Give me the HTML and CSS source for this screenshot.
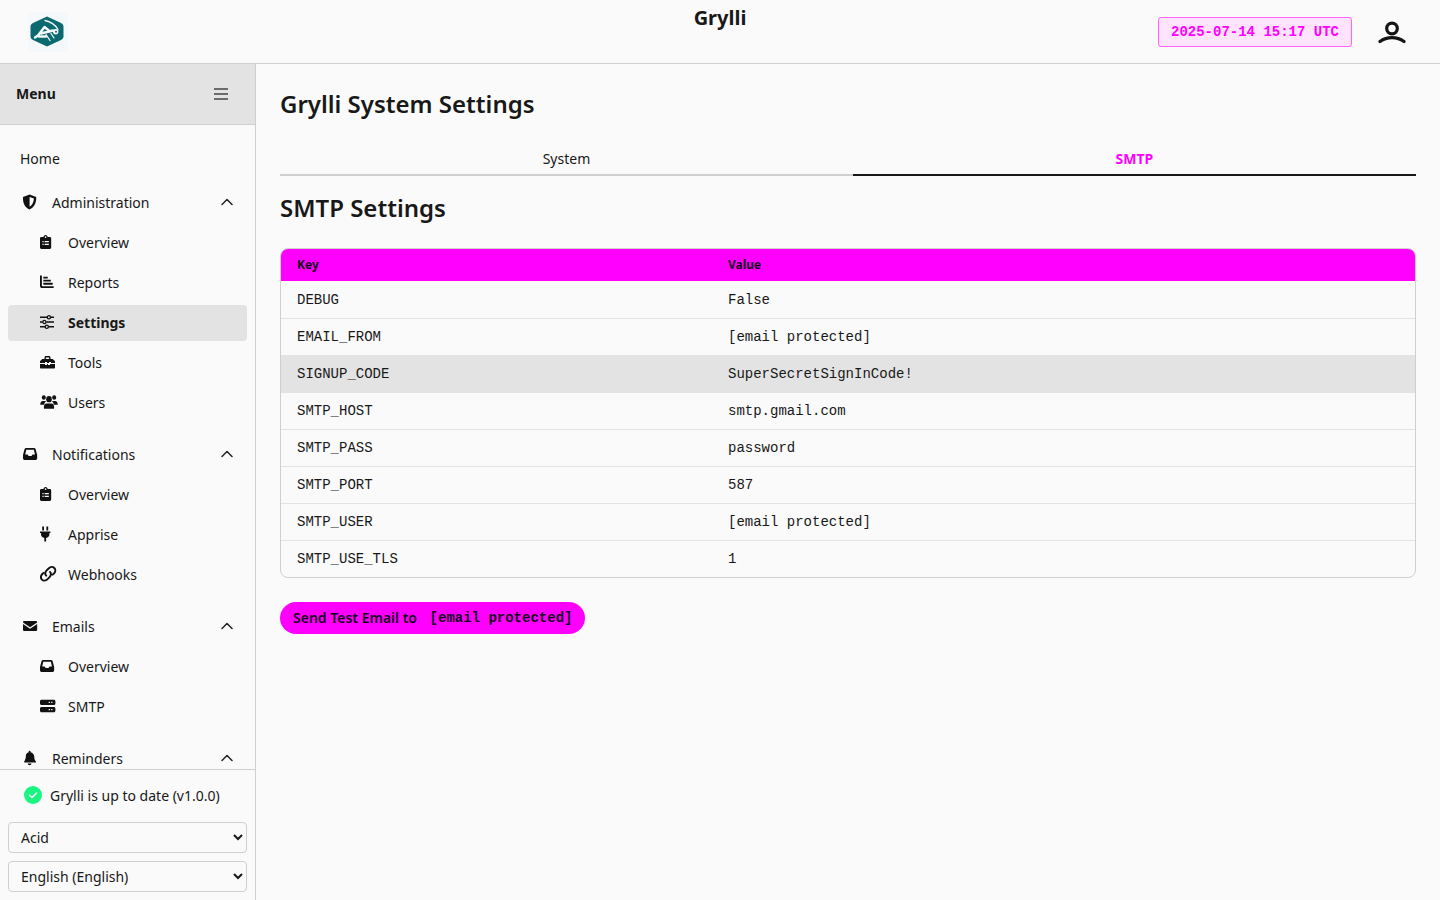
FILE: index.html
```html
<!DOCTYPE html>
<html lang="en">
<head>
  <meta charset="UTF-8" />
  <meta name="viewport" content="width=device-width, initial-scale=1.0" />
  <title>Grylli System Settings</title>
  <link rel="stylesheet" href="styles.css">
</head>
<body>
  <svg class="icon-defs" aria-hidden="true">
    <symbol id="i-shield" viewBox="1.4 0 18 16" preserveAspectRatio="xMinYMid meet">
      <path d="M8 0.5 14.6 3c.3 5.500-1.600 10.300-6.600 12.500C3 13.300 1.100 8.500 1.400 3ZM8 3v9.800c2.800-1.600 4.200-4.600 4.300-8.200Z" fill-rule="evenodd"/>
    </symbol>
    <symbol id="i-clipboard" viewBox="2 -0.6 18 17.2" preserveAspectRatio="xMinYMid meet">
      <path d="M3.500 2.500h2.200C6 1.200 6.900.4 8 .4s2 .8 2.300 2.100h2.200c.9 0 1.500.6 1.500 1.500v10c0 .9-.6 1.500-1.500 1.500h-9c-.9 0-1.500-.6-1.500-1.500V4c0-.9.600-1.500 1.500-1.500ZM8 1.800a.9.900 0 1 0 0 1.800.9.900 0 0 0 0-1.800ZM4.600 7v1.300h1.300V7Zm2.400 0v1.300h4.500V7Zm-2.400 3v1.300h1.300V10Zm2.400 0v1.300h4.500V10Z" fill-rule="evenodd"/>
    </symbol>
    <symbol id="i-reports" viewBox="1 0 19 17" preserveAspectRatio="xMinYMid meet">
      <path d="M1 1.500h2v11c0 .3.200.5.500.5H15.500V15H3.200C2 15 1 14 1 12.800ZM4.500 2.800h4.700v1.900H4.500Zm0 3.300h8v1.900h-8Zm0 3.300h10v1.900h-10Z"/>
    </symbol>
    <symbol id="i-sliders" viewBox="1 0 18 16" preserveAspectRatio="xMinYMid meet">
      <path d="M1 2.600h7.300v1.500H1Zm10.500 0H15v1.500h-3.500ZM1 7.300h2.700v1.500H1Zm6.300 0H15v1.500H7.300ZM1 12h5v1.500H1Zm8.700 0H15v1.500H9.700Z"/>
      <circle cx="9.900" cy="3.300" r="1.600" fill="none" stroke="currentColor" stroke-width="1.300"/>
      <circle cx="5.400" cy="8" r="1.600" fill="none" stroke="currentColor" stroke-width="1.300"/>
      <circle cx="7.800" cy="12.700" r="1.600" fill="none" stroke="currentColor" stroke-width="1.300"/>
    </symbol>
    <symbol id="i-toolbox" viewBox=".5 0 18 16" preserveAspectRatio="xMinYMid meet">
      <path d="M5 5V3.500C5 2.700 5.700 2 6.500 2h3c.8 0 1.500.7 1.500 1.500V5h1.700c.4 0 .7.100 1 .4l1.400 1.400c.3.300.4.600.4 1V9h-4V8h-2v1H7.500V8h-2v1H.5V7.800c0-.4.100-.7.400-1l1.400-1.400c.3-.3.600-.4 1-.4Zm1.400 0h3.200V3.400H6.400ZM.5 10h5v1h2v-1h1v1h2v-1h5v3.500c0 .6-.4 1-1 1h-13c-.6 0-1-.4-1-1Z" fill-rule="evenodd"/>
    </symbol>
    <symbol id="i-users" viewBox="0 1 18 14" preserveAspectRatio="none">
      <circle cx="3.800" cy="4" r="2"/><circle cx="14.200" cy="4" r="2"/><circle cx="9" cy="5.500" r="2.800"/>
      <path d="M.3 10c0-1.500 1-2.800 2.500-2.800h2c.5 0 .900.100 1.200.4-1 .6-1.700 1.500-1.800 2.900H.3ZM13.800 10.500c-.1-1.400-.8-2.300-1.800-2.900.3-.3.700-.4 1.200-.4h2c1.500 0 2.500 1.300 2.500 2.800v.5ZM6.500 9.300h5c1.500 0 2.600 1.200 2.600 2.700v1.200c0 .5-.4.800-.8.800H4.700c-.4 0-.8-.3-.8-.8V12c0-1.500 1.100-2.700 2.600-2.700Z"/>
    </symbol>
    <symbol id="i-inbox" viewBox=".3 -0.7 19.500 17.400" preserveAspectRatio="xMinYMid meet">
      <path d="M3.700 1.500h8.600c.8 0 1.400.4 1.700 1.100l1.500 5.700c.2.400.2.700.2 1v3.200c0 1.100-.9 2-2 2H2.300c-1.100 0-2-.9-2-2V9.300c0-.3 0-.6.200-1L2 2.600C2.300 1.900 2.900 1.500 3.700 1.500Zm.2 2L2.700 8.500h2.700l1 1.800h3.200l1-1.800h2.700L12.100 3.500Z" fill-rule="evenodd"/>
    </symbol>
    <symbol id="i-plug" viewBox="2.800 0 18 16" preserveAspectRatio="xMinYMid meet">
      <path d="M5 .5h1.800v4H5ZM9.200 .5H11v4H9.200ZM2.800 5.500h10.400v1.600h-1V8.300c0 2-1.500 3.500-3.300 3.800v3.400H7.100v-3.400c-1.800-.3-3.300-1.800-3.300-3.800V7.100h-1Z"/>
    </symbol>
    <symbol id="i-link" viewBox=".8 1 16 14.400" preserveAspectRatio="none">
      <path d="M6.300 9.700c-1.300-1.300-1-3.300.4-4.700l2-2c1.400-1.400 3.500-1.500 4.800-.2s1.200 3.400-.2 4.800l-1.200 1.200M9.700 6.300c1.300 1.300 1 3.300-.4 4.700l-2 2c-1.400 1.400-3.500 1.500-4.800.2s-1.200-3.400.2-4.800l1.200-1.200" fill="none" stroke="currentColor" stroke-width="1.700" stroke-linecap="round"/>
    </symbol>
    <symbol id="i-envelope" viewBox=".3 -0.7 19.500 17.400" preserveAspectRatio="xMinYMid meet">
      <path d="M1.800 2.500h12.400c.8 0 1.500.6 1.500 1.400v.3L8 9.300.3 4.200v-.3c0-.8.7-1.400 1.500-1.400ZM.3 5.800 8 10.900l7.700-5.100V12c0 .8-.7 1.500-1.500 1.500H1.800C1 13.500.3 12.800.3 12Z"/>
    </symbol>
    <symbol id="i-server" viewBox=".3 0 18 16" preserveAspectRatio="xMinYMid meet">
      <path d="M1.800 1.800h12.400c.8 0 1.500.7 1.500 1.500v2.200c0 .8-.7 1.500-1.500 1.500H1.800C1 7 .3 6.300.3 5.500V3.300c0-.8.7-1.500 1.500-1.500Zm9.700 2v1.300h1.300V3.800Zm-2.500 0v1.300h1.300V3.800ZM1.800 9h12.400c.8 0 1.500.7 1.500 1.500v2.200c0 .8-.7 1.500-1.500 1.500H1.800c-.8 0-1.500-.7-1.500-1.500v-2.200C.3 9.700 1 9 1.800 9Zm9.700 2v1.300h1.300V11ZM9 11v1.300h1.300V11Z" fill-rule="evenodd"/>
    </symbol>
    <symbol id="i-bell" viewBox="1 -0.4 19 17" preserveAspectRatio="xMinYMid meet">
      <path d="M8 .3c.6 0 1 .4 1 1v.6c2.400.5 4 2.500 4 4.900v1c0 1.300.5 2.500 1.300 3.500l.4.500c.4.500 0 1.200-.6 1.200H2.900c-.6 0-1-.7-.6-1.200l.4-.5C3.500 9.300 4 8.100 4 6.800v-1C4 3.400 5.600 2.400 7 1.900v-.6c0-.6.400-1 1-1ZM6 14h4c0 1.100-.9 1.800-2 1.800S6 15.100 6 14Z"/>
    </symbol>
    <symbol id="i-chevron" viewBox="0 0 16 16">
      <path d="M3 10.500 8 5.500l5 5" fill="none" stroke="currentColor" stroke-width="1.500" stroke-linecap="round" stroke-linejoin="round"/>
    </symbol>
  </svg>

  <header class="topbar">
    <div class="logo-box">
      <svg class="logo" viewBox="0 0 34 31">
        <path class="logo-hex" d="M17 0.500 31 7c1.500.7 2.500 2 2.500 3.700v9.600c0 1.700-1 3-2.500 3.700l-14 6.500L3 24c-1.500-.7-2.500-2-2.500-3.700v-9.600C.5 9 1.500 7.700 3 7Z"/>
        <path class="logo-body" d="M5 21.500 8 19.500 14.500 11 20 15.500M11 17.500 23 14.500M9 20.500h7"/>
        <path class="logo-legs" d="M16 18.500 20 24.500M21 17.500 24 22M15 4.500c5 1 10 4 13 9"/>
        <circle class="logo-eye" cx="25.700" cy="15.700" r="2.700"/>
        <circle class="logo-pupil" cx="26" cy="15.700" r="1"/>
      </svg>
    </div>
    <div class="app-title">Grylli</div>
    <div class="topbar-right">
      <span class="clock">2025-07-14 15:17 UTC</span>
      <svg class="user-icon" viewBox="0 0 28 24">
        <circle cx="14" cy="8.500" r="5.300"/>
        <path d="M2 21.500c3.500-2.600 7.500-3.900 12-3.900s8.500 1.300 12 3.900"/>
      </svg>
    </div>
  </header>

  <div class="layout">
    <aside class="sidebar">
      <div class="menu-head">
        <span>Menu</span>
        <svg class="burger" viewBox="0 0 16 16"><path d="M1 3h14M1 8h14M1 13h14"/></svg>
      </div>

      <nav class="menu">
        <a class="item home">Home</a>

        <div class="group">
          <a class="item parent"><svg class="ico"><use href="#i-shield"/></svg>Administration<svg class="chev"><use href="#i-chevron"/></svg></a>
          <a class="item child"><svg class="ico"><use href="#i-clipboard"/></svg>Overview</a>
          <a class="item child"><svg class="ico"><use href="#i-reports"/></svg>Reports</a>
          <a class="item child active"><svg class="ico"><use href="#i-sliders"/></svg>Settings</a>
          <a class="item child"><svg class="ico"><use href="#i-toolbox"/></svg>Tools</a>
          <a class="item child"><svg class="ico"><use href="#i-users"/></svg>Users</a>
        </div>

        <div class="group">
          <a class="item parent"><svg class="ico"><use href="#i-inbox"/></svg>Notifications<svg class="chev"><use href="#i-chevron"/></svg></a>
          <a class="item child"><svg class="ico"><use href="#i-clipboard"/></svg>Overview</a>
          <a class="item child"><svg class="ico"><use href="#i-plug"/></svg>Apprise</a>
          <a class="item child"><svg class="ico"><use href="#i-link"/></svg>Webhooks</a>
        </div>

        <div class="group">
          <a class="item parent"><svg class="ico"><use href="#i-envelope"/></svg>Emails<svg class="chev"><use href="#i-chevron"/></svg></a>
          <a class="item child"><svg class="ico"><use href="#i-inbox"/></svg>Overview</a>
          <a class="item child"><svg class="ico"><use href="#i-server"/></svg>SMTP</a>
        </div>

        <div class="group">
          <a class="item parent"><svg class="ico"><use href="#i-bell"/></svg>Reminders<svg class="chev"><use href="#i-chevron"/></svg></a>
        </div>
      </nav>

      <div class="side-foot">
        <div class="status">
          <svg class="status-ok" viewBox="0 0 18 18">
            <circle cx="9" cy="9" r="9"/>
            <path d="M5.500 9.300 8 11.500l4.500-4.500"/>
          </svg>
          Grylli is up to date (v1.0.0)
        </div>
        <select class="side-select"><option>Acid</option></select>
        <select class="side-select"><option>English (English)</option></select>
      </div>
    </aside>

    <main class="content">
      <h1>Grylli System Settings</h1>

      <div class="tabs">
        <a class="tab">System</a>
        <a class="tab tab-on">SMTP</a>
      </div>

      <h2>SMTP Settings</h2>

      <div class="table-wrap">
        <table>
          <thead>
            <tr><th class="col-key">Key</th><th>Value</th></tr>
          </thead>
          <tbody>
            <tr><td>DEBUG</td><td>False</td></tr>
            <tr><td>EMAIL_FROM</td><td>[email protected]</td></tr>
            <tr class="hover"><td>SIGNUP_CODE</td><td>SuperSecretSignInCode!</td></tr>
            <tr><td>SMTP_HOST</td><td>smtp.gmail.com</td></tr>
            <tr><td>SMTP_PASS</td><td>password</td></tr>
            <tr><td>SMTP_PORT</td><td>587</td></tr>
            <tr><td>SMTP_USER</td><td>[email protected]</td></tr>
            <tr><td>SMTP_USE_TLS</td><td>1</td></tr>
          </tbody>
        </table>
      </div>

      <button class="send-btn">Send Test Email to <code>[email protected]</code></button>
    </main>
  </div>
</body>
</html>
```

FILE: styles.css
```css
* {
  box-sizing: border-box;
}
html, body {
  height: 100%;
}
body {
  margin: 0;
  font-family: "Noto Sans", sans-serif;
  font-size: 14px;
  color: #181818;
  background: #fafafa;
  overflow: hidden;
}
.icon-defs {
  display: none;
}

/* top bar */
.topbar {
  height: 64px;
  display: grid;
  grid-template-columns: 1fr auto 1fr;
  border-bottom: 1px solid #cfcfcf;
}
.logo-box {
  width: 40px;
  height: 40px;
  margin: 12px 0 0 28px;
  padding: 4px 0 0 2px;
  background: #f5f8fa;
}
.logo {
  display: block;
  width: 34px;
  height: 31px;
}
.logo-hex {
  fill: #0b6a70;
}
.logo-body, .logo-legs {
  fill: none;
  stroke: #f4f8f8;
  stroke-linecap: round;
  stroke-linejoin: round;
}
.logo-body {
  stroke-width: 2.4;
}
.logo-legs {
  stroke-width: 1.3;
}
.logo-eye {
  fill: #f4f8f8;
}
.logo-pupil {
  fill: #0b6a70;
}
.app-title {
  font-size: 20px;
  font-weight: 700;
  line-height: 28px;
  padding-top: 4px;
}
.topbar-right {
  display: flex;
  justify-content: flex-end;
  align-items: center;
  gap: 26px;
  padding: 1px 34px 0 0;
}
.clock {
  width: 194px;
  height: 30px;
  line-height: 28px;
  text-align: center;
  font-family: "Liberation Mono", monospace;
  font-weight: 700;
  font-size: 14px;
  color: #ff00ff;
  background: #ffe3ff;
  border: 1px solid #ff66ff;
  border-radius: 3px;
}
.user-icon {
  width: 28px;
  height: 24px;
  fill: none;
  stroke: #141414;
  stroke-width: 3.2;
  stroke-linecap: round;
}

/* sidebar */
.layout {
  display: flex;
  height: 836px;
}
.sidebar {
  width: 256px;
  flex: none;
  border-right: 1px solid #cfcfcf;
  display: flex;
  flex-direction: column;
}
.menu-head {
  height: 61px;
  flex: none;
  display: flex;
  align-items: center;
  justify-content: space-between;
  padding: 0 26px 1px 16px;
  background: #e3e3e3;
  border-bottom: 1px solid #cfcfcf;
  font-weight: 700;
}
.burger {
  width: 16px;
  height: 16px;
  stroke: #444;
  stroke-width: 1.7;
}
.menu {
  flex: 1;
  min-height: 0;
  overflow: hidden;
  padding: 16px 8px 0;
}
.item {
  height: 36px;
  display: flex;
  align-items: center;
  padding: 0 12px 2px;
  margin-bottom: 4px;
  border-radius: 4px;
}
.home {
  margin-bottom: 8px;
}
.group {
  margin-bottom: 16px;
}
.parent {
  padding-left: 15px;
}
.child {
  padding-left: 32px;
}
.active {
  background: #e3e3e3;
  font-weight: 700;
}
.ico {
  width: 18px;
  height: 16px;
  flex: none;
  margin-right: 10px;
  fill: #111;
  color: #111;
}
.parent .ico {
  margin-right: 11px;
}
.chev {
  width: 16px;
  height: 16px;
  margin-left: auto;
  color: #222;
}
.side-foot {
  flex: none;
  border-top: 1px solid #cfcfcf;
  padding: 13px 8px 0;
}
.status {
  display: flex;
  align-items: center;
  gap: 8px;
  padding-left: 16px;
  height: 24px;
  margin-bottom: 15px;
}
.status-ok {
  width: 18px;
  height: 18px;
  fill: #1af582;
}
.status-ok path {
  fill: none;
  stroke: #fff;
  stroke-width: 1.5;
  stroke-linecap: round;
  stroke-linejoin: round;
}
.side-select {
  display: block;
  width: 100%;
  height: 31px;
  margin-bottom: 8px;
  padding: 0 8px;
  font-family: "Noto Sans", sans-serif;
  font-size: 14px;
  color: #181818;
  background: #fafafa;
  border: 1px solid #cfcfcf;
  border-radius: 4px;
}

/* main area */
.content {
  flex: 1;
  min-width: 0;
  padding: 24px;
}
h1 {
  margin: 0;
  font-size: 24px;
  font-weight: 600;
  line-height: 32px;
}
.tabs {
  display: flex;
  margin-top: 23px;
}
.tab {
  flex: 1 1 auto;
  height: 33px;
  line-height: 32px;
  text-align: center;
  border-bottom: 2px solid #cfcfcf;
}
.tab-on {
  font-weight: 700;
  color: #ff00ff;
  border-bottom-color: #181818;
}
h2 {
  margin: 16px 0 24px;
  font-size: 24px;
  font-weight: 600;
  line-height: 32px;
}
.table-wrap {
  border: 1px solid #cfcfcf;
  border-radius: 8px;
  overflow: hidden;
}
table {
  width: 100%;
  border-collapse: collapse;
  table-layout: fixed;
}
th {
  height: 32px;
  padding: 0 16px 2px;
  text-align: left;
  font-size: 12px;
  font-weight: 700;
  background: #ff00ff;
  color: #14001a;
}
.col-key {
  width: 431px;
}
td {
  height: 37px;
  padding: 0 16px;
  font-family: "Liberation Mono", monospace;
  font-size: 14px;
  border-top: 1px solid #e3e3e3;
}
tbody tr:first-child td {
  border-top: 0;
  padding-top: 2px;
}
.hover td {
  background: #e3e3e3;
}
.send-btn {
  display: inline-block;
  height: 32px;
  margin-top: 24px;
  padding: 0 13px 2px;
  font-family: "Noto Sans", sans-serif;
  font-size: 14px;
  font-weight: 600;
  color: #14001a;
  background: #ff00ff;
  border: 0;
  border-radius: 16px;
}
.send-btn code {
  font-family: "Liberation Mono", monospace;
  font-weight: 700;
  margin-left: 9px;
  vertical-align: 1px;
}
```
